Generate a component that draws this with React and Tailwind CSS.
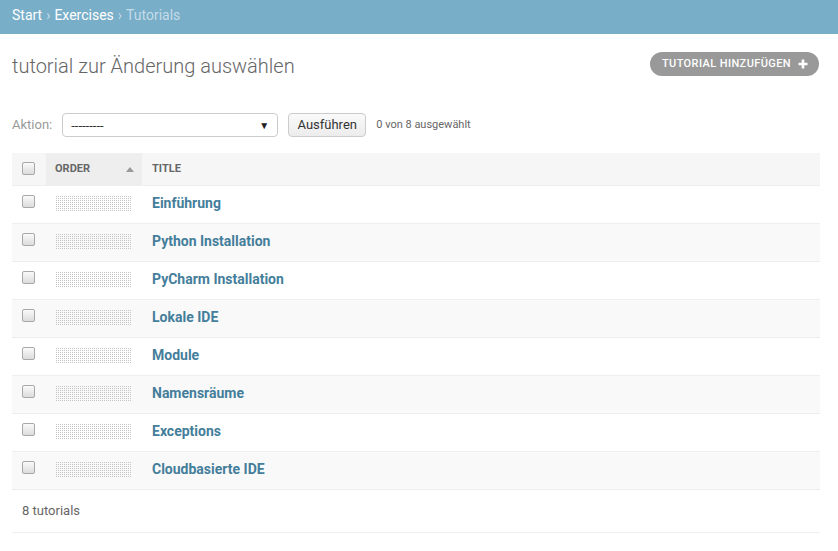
import React from "react";

const rows = [
  "Einführung",
  "Python Installation",
  "PyCharm Installation",
  "Lokale IDE",
  "Module",
  "Namensräume",
  "Exceptions",
  "Cloudbasierte IDE",
];

function Box() {
  return (
    <span className="block w-[13px] h-[13px] rounded-[2px] border border-[#a8a8a8] bg-gradient-to-b from-[#fafafa] to-[#dcdcdc]" />
  );
}

function Dots() {
  return (
    <svg width="76" height="16" className="block">
      <defs>
        <pattern id="dp" width="2" height="2" patternUnits="userSpaceOnUse">
          <rect x="0" y="0" width="1" height="1" fill="#c4c4c4" />
        </pattern>
      </defs>
      <rect width="76" height="16" fill="url(#dp)" />
    </svg>
  );
}

export default function App() {
  return (
    <div className="min-h-[551px] bg-white font-['Roboto','Liberation_Sans',sans-serif] text-[#333]">
      <div className="h-[34px] bg-[#79aec8] px-[12px] pb-[3px] flex items-center text-[14px] text-white">
        <span>Start</span>
        <span className="mx-[4px] text-[#c4dce8]">›</span>
        <span>Exercises</span>
        <span className="mx-[4px] text-[#c4dce8]">›</span>
        <span className="text-[#c4dce8]">Tutorials</span>
      </div>
      <div className="pl-[12px] pr-[18px]">
        <div className="flex items-start justify-between h-[66px]">
          <h1 className="mt-[18px] text-[20px] leading-[28px] font-light text-[#666]">tutorial zur Änderung auswählen</h1>
          <div className="mt-[18px] h-[24px] pl-[12px] pr-[11px] mr-[1px] rounded-full bg-[#999] text-white text-[11px] font-medium tracking-[0.4px] flex items-center gap-[7px]">
            TUTORIAL HINZUFÜGEN
            <svg width="10" height="10" viewBox="0 0 10 10"><path d="M5 0.5v9M0.5 5h9" stroke="white" strokeWidth="2.6" /></svg>
          </div>
        </div>
        <div className="flex items-center h-[24px] mt-[13px] text-[13px] text-[#999]">
          <span>Aktion:</span>
          <div className="ml-[10px] w-[216px] h-[24px] border border-[#ccc] rounded-[4px] flex items-center justify-between px-[8px] text-[#333] text-[13px]">
            <span className="leading-none">---------</span>
            <span className="text-[10px] text-[#222]">▼</span>
          </div>
          <div className="ml-[10px] w-[78px] h-[24px] border border-[#ccc] rounded-[4px] bg-gradient-to-b from-[#fafafa] to-[#ececec] flex items-center justify-center text-[13px] text-[#333]">
            Ausführen
          </div>
          <span className="ml-[10px] text-[11px] text-[#666]">0 von 8 ausgewählt</span>
        </div>
        <div className="mt-[16px]">
          <div className="flex h-[33px] bg-[#f6f6f6] text-[11px] font-bold text-[#666] border-b border-[#eee]">
            <div className="w-[34px] flex items-center pl-[10px] pb-[2px]"><Box /></div>
            <div className="w-[96px] bg-[#eee] flex items-center justify-between pl-[9px] pr-[8px]">
              <span>ORDER</span>
              <svg width="8" height="5" viewBox="0 0 8 5"><path d="M0 5L4 0L8 5Z" fill="#999" /></svg>
            </div>
            <div className="flex items-center pl-[10px]">TITLE</div>
          </div>
          {rows.map((r, i) => (
            <div key={r} className={`flex h-[38px] border-b border-[#eee] ${i % 2 === 1 ? "bg-[#f9f9f9]" : "bg-white"}`}>
              <div className="w-[34px] flex items-center pl-[10px] pb-[6px]"><Box /></div>
              <div className="w-[96px] flex items-center pl-[10px] pb-[2px]"><Dots /></div>
              <div className="flex items-center pl-[10px] pb-[2px] text-[14px] font-bold text-[#447e9b]">{r}</div>
            </div>
          ))}
          <div className="h-[43px] flex items-center pl-[10px] text-[13px] text-[#666] border-b border-[#eee]">8 tutorials</div>
        </div>
      </div>
    </div>
  );
}
